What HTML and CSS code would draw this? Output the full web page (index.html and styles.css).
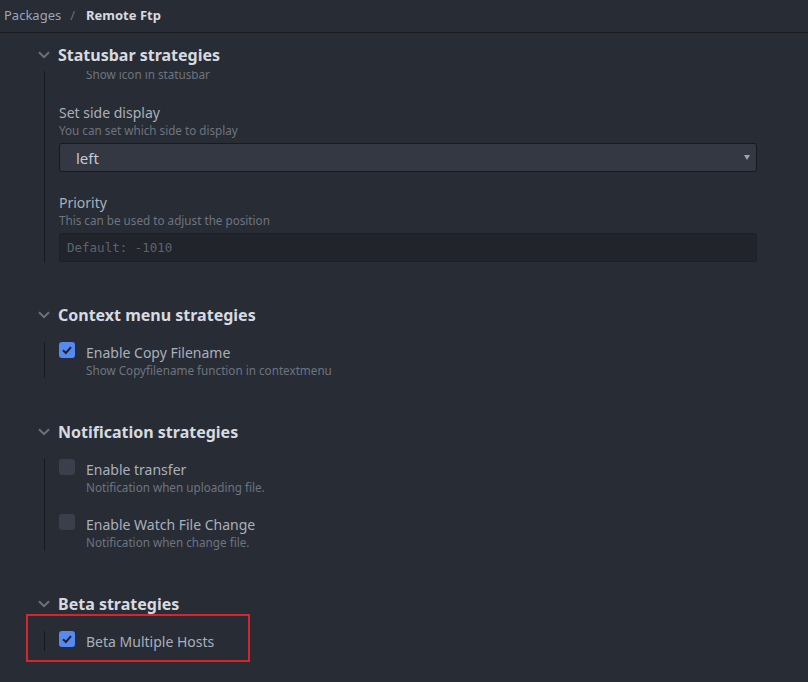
FILE: index.html
```html
<!DOCTYPE html>
<html lang="en">
<head>
<meta charset="utf-8">
<title>Remote Ftp settings</title>
<link rel="stylesheet" href="styles.css">
</head>
<body>
<header class="crumbs">
  <span class="crumb">Packages</span>
  <span class="crumb-sep">/</span>
  <span class="crumb crumb-current">Remote Ftp</span>
</header>
<main class="settings">
  <section class="section section-scrolled">
    <h2 class="section-title">
      <svg class="chevron" viewBox="0 0 12 8" width="12" height="8"><path d="M1 1.2 L6 6.2 L11 1.2" fill="none" stroke="currentColor" stroke-width="2"/></svg>
      <span>Statusbar strategies</span>
    </h2>
    <div class="section-body">
      <div class="clipped"><p class="desc desc-indent">Show icon in statusbar</p></div>
      <div class="field field-first">
        <div class="field-title">Set side display</div>
        <p class="desc">You can set which side to display</p>
        <div class="select"><span class="select-value">left</span></div>
      </div>
      <div class="field">
        <div class="field-title">Priority</div>
        <p class="desc">This can be used to adjust the position</p>
        <div class="input"><span class="placeholder">Default: -1010</span></div>
      </div>
    </div>
  </section>

  <section class="section section-context">
    <h2 class="section-title">
      <svg class="chevron" viewBox="0 0 12 8" width="12" height="8"><path d="M1 1.2 L6 6.2 L11 1.2" fill="none" stroke="currentColor" stroke-width="2"/></svg>
      <span>Context menu strategies</span>
    </h2>
    <div class="section-body">
      <div class="check-row">
        <span class="checkbox checked"><svg viewBox="0 0 16 16" width="16" height="16"><path d="M4 8.2 L6.9 11 L12 5.2" fill="none" stroke="currentColor" stroke-width="2"/></svg></span>
        <div class="check-text">
          <div class="field-title">Enable Copy Filename</div>
          <p class="desc">Show Copyfilename function in contextmenu</p>
        </div>
      </div>
    </div>
  </section>

  <section class="section">
    <h2 class="section-title">
      <svg class="chevron" viewBox="0 0 12 8" width="12" height="8"><path d="M1 1.2 L6 6.2 L11 1.2" fill="none" stroke="currentColor" stroke-width="2"/></svg>
      <span>Notification strategies</span>
    </h2>
    <div class="section-body">
      <div class="check-row">
        <span class="checkbox"></span>
        <div class="check-text">
          <div class="field-title">Enable transfer</div>
          <p class="desc">Notification when uploading file.</p>
        </div>
      </div>
      <div class="check-row check-row-next">
        <span class="checkbox"></span>
        <div class="check-text">
          <div class="field-title">Enable Watch File Change</div>
          <p class="desc">Notification when change file.</p>
        </div>
      </div>
    </div>
  </section>

  <section class="section section-beta">
    <h2 class="section-title">
      <svg class="chevron" viewBox="0 0 12 8" width="12" height="8"><path d="M1 1.2 L6 6.2 L11 1.2" fill="none" stroke="currentColor" stroke-width="2"/></svg>
      <span>Beta strategies</span>
    </h2>
    <div class="section-body">
      <div class="check-row">
        <span class="checkbox checked"><svg viewBox="0 0 16 16" width="16" height="16"><path d="M4 8.2 L6.9 11 L12 5.2" fill="none" stroke="currentColor" stroke-width="2"/></svg></span>
        <div class="check-text">
          <div class="field-title">Beta Multiple Hosts</div>
        </div>
      </div>
    </div>
    <div class="highlight"></div>
  </section>
</main>
</body>
</html>
```

FILE: styles.css
```css
* { box-sizing: border-box; }

html, body {
  margin: 0;
  padding: 0;
  background: #282c34;
  height: 100%;
  overflow: hidden;
}

body {
  font-family: "Noto Sans", "Open Sans", sans-serif;
  color: #9da5b4;
}

.crumbs {
  height: 33px;
  border-bottom: 1px solid #181a1f;
  display: flex;
  align-items: center;
  padding: 0 0 3px 4px;
  font-size: 13px;
  line-height: 18px;
  gap: 9px;
}

.crumb { color: #9da5b4; }
.crumb-sep { color: #6b717d; }
.crumb-current { color: #d7dae0; font-weight: 700; margin-left: 2px; }

.settings {
  padding: 10px 51px 0 0;
}

.section {
  position: relative;
  margin-top: 42px;
}
.section-scrolled { margin-top: 0; }
.section-context { margin-top: 41px; }

.section-title {
  margin: 0 0 15px 38px;
  display: flex;
  align-items: center;
  gap: 8px;
  font-size: 16px;
  line-height: 24px;
  font-weight: 700;
  color: #d7dae0;
}
.section-scrolled .section-title { margin-bottom: 4px; }

.chevron { color: #6b717d; flex: none; }

.section-body {
  margin-left: 44px;
  border-left: 1px solid #181a1f;
  padding-left: 14px;
}

.desc {
  margin: 0;
  font-size: 11.7px;
  line-height: 16px;
  color: #6e7480;
}

.clipped {
  height: 9px;
  overflow: hidden;
}
.clipped .desc { margin-top: -5px; }
.desc-indent { padding-left: 27px; }

.field-title {
  font-size: 14px;
  line-height: 18px;
  color: #aab0bb;
}

.field-first { margin-top: 24px; }
.field + .field { margin-top: 22px; }

.select {
  position: relative;
  margin-top: 5px;
  height: 29px;
  background: #333842;
  border: 1px solid #181a1f;
  border-radius: 3px;
  display: flex;
  align-items: center;
  padding-left: 16px;
}
.select-value {
  font-size: 15px;
  color: #c5cad3;
  line-height: 20px;
}
.select::after {
  content: "";
  position: absolute;
  right: 6px;
  top: 11px;
  border-left: 3px solid transparent;
  border-right: 3px solid transparent;
  border-top: 5px solid #9da5b4;
}

.input {
  margin-top: 5px;
  height: 29px;
  background: #21252b;
  border: 1px solid #1d2026;
  border-radius: 3px;
  display: flex;
  align-items: center;
  padding-left: 7px;
}
.placeholder {
  font-family: "DejaVu Sans Mono", "Liberation Mono", monospace;
  font-size: 12.5px;
  color: #5c6370;
}

.check-row {
  display: flex;
  align-items: flex-start;
}
.check-row-next { margin-top: 19px; }

.checkbox {
  flex: none;
  width: 16px;
  height: 16px;
  border-radius: 3px;
  background: #3a3f4b;
  display: flex;
  color: #1e2229;
}
.checkbox.checked { background: #568af2; }

.check-text {
  margin-left: 11px;
  padding-top: 2px;
}

.highlight {
  position: absolute;
  left: 26px;
  top: 22px;
  width: 224px;
  height: 48px;
  border: 2px solid #d9242b;
}
```
